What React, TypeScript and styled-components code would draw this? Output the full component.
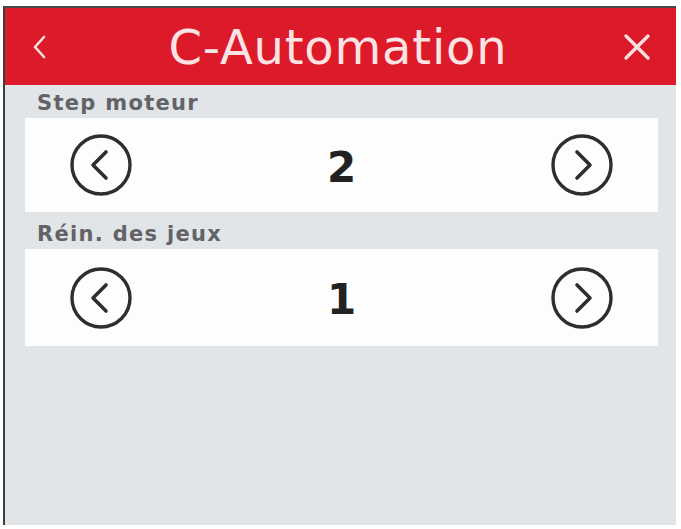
import * as React from 'react';
import styled, { createGlobalStyle } from 'styled-components';

const GlobalStyle = createGlobalStyle`
    html, body {
        margin: 0;
        padding: 0;
        background: #ffffff;
    }
    body {
        font-family: "DejaVu Sans", "Liberation Sans", sans-serif;
    }
`;

const Frame = styled.div`
    width: 681px;
    height: 529px;
    box-sizing: border-box;
    padding: 6px 5px 4px 3px;
    background: #ffffff;
`;

const Panel = styled.div`
    height: 100%;
    box-sizing: border-box;
    display: flex;
    flex-direction: column;
    border-left: 2px solid #3d3d3d;
    border-top: 2px solid #4a4a4a;
    background: #e2e5e8;
`;

const Header = styled.header`
    height: 77px;
    flex: none;
    display: flex;
    align-items: center;
    justify-content: space-between;
    padding: 0 22px 0 17px;
    background: #dd1a2a;
`;

const Title = styled.h1`
    margin: 0;
    font-size: 48px;
    font-weight: 400;
    color: #fbe3e3;
    letter-spacing: 0.8px;
`;

const HeaderButton = styled.button`
    width: 34px;
    height: 40px;
    padding: 0;
    border: 0;
    background: transparent;
    display: flex;
    align-items: center;
    justify-content: center;
    color: #fbe0e0;
`;

const Content = styled.main`
    flex: 1;
    display: flex;
    flex-direction: column;
    padding: 6px 18px 0 20px;
`;

const Label = styled.div`
    font-size: 21px;
    font-weight: 700;
    color: #636367;
    letter-spacing: 1.3px;
    padding-left: 12px;
    height: 27px;
    line-height: 24px;
`;

const Card = styled.div<{ tall?: boolean }>`
    height: ${(p) => (p.tall ? 97 : 94)}px;
    margin-bottom: 10px;
    display: grid;
    grid-template-columns: 1fr auto 1fr;
    align-items: center;
    background: #fdfdfd;
`;

const StepButton = styled.button<{ side: 'left' | 'right' }>`
    justify-self: ${(p) => (p.side === 'left' ? 'start' : 'end')};
    margin: 0 44px;
    width: 64px;
    height: 64px;
    padding: 0;
    border: 0;
    background: transparent;
    color: #2e2e2e;
`;

const Value = styled.span`
    font-size: 42px;
    font-weight: 700;
    color: #222222;
    padding-top: 4px;
`;

const ArrowCircle: React.FC<{ dir: 'left' | 'right' }> = ({ dir }) => (
    <svg width="64" height="64" viewBox="0 0 64 64" fill="none" stroke="currentColor">
        <circle cx="32" cy="32" r="29" strokeWidth="3.4" />
        {dir === 'left' ? (
            <path d="M37 19 L24 32 L37 45" strokeWidth="3.6" strokeLinecap="round" strokeLinejoin="round" />
        ) : (
            <path d="M27 19 L40 32 L27 45" strokeWidth="3.6" strokeLinecap="round" strokeLinejoin="round" />
        )}
    </svg>
);

type Setting = { label: string; value: number };

const settings: Setting[] = [
    { label: 'Step moteur', value: 2 },
    { label: 'Réin. des jeux', value: 1 },
];

export default function App() {
    const [values, setValues] = React.useState(settings.map((s) => s.value));

    const step = (i: number, d: number) =>
        setValues((v) => v.map((x, j) => (j === i ? Math.max(0, x + d) : x)));

    return (
        <>
            <GlobalStyle />
            <Frame>
                <Panel>
                    <Header>
                        <HeaderButton aria-label="Retour">
                            <svg width="16" height="26" viewBox="0 0 16 26" fill="none" stroke="currentColor">
                                <path d="M13 3 L4 13 L13 23" strokeWidth="2.6" strokeLinecap="round" strokeLinejoin="round" />
                            </svg>
                        </HeaderButton>
                        <Title>C-Automation</Title>
                        <HeaderButton aria-label="Fermer">
                            <svg width="28" height="28" viewBox="0 0 28 28" fill="none" stroke="currentColor">
                                <path d="M3 3 L25 25 M25 3 L3 25" strokeWidth="3.4" strokeLinecap="round" />
                            </svg>
                        </HeaderButton>
                    </Header>
                    <Content>
                        {settings.map((s, i) => (
                            <React.Fragment key={s.label}>
                                <Label>{s.label}</Label>
                                <Card tall={i === 1}>
                                    <StepButton side="left" onClick={() => step(i, -1)}>
                                        <ArrowCircle dir="left" />
                                    </StepButton>
                                    <Value>{values[i]}</Value>
                                    <StepButton side="right" onClick={() => step(i, 1)}>
                                        <ArrowCircle dir="right" />
                                    </StepButton>
                                </Card>
                            </React.Fragment>
                        ))}
                    </Content>
                </Panel>
            </Frame>
        </>
    );
}
